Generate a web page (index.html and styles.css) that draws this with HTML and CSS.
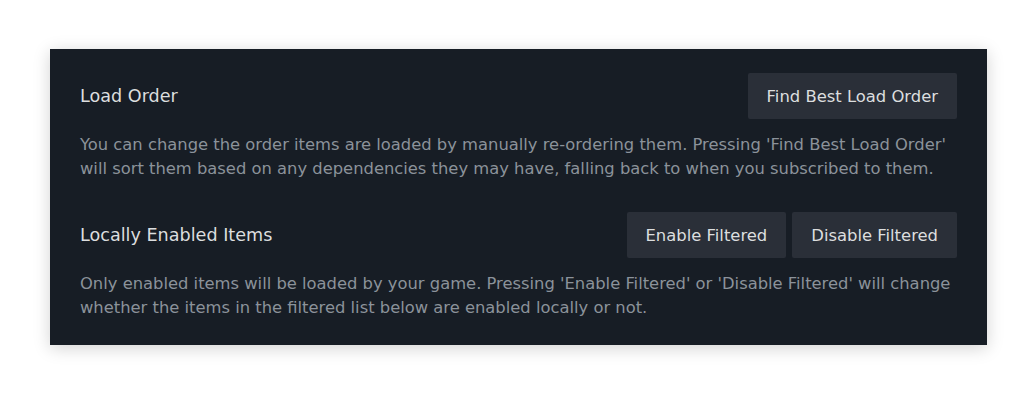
FILE: index.html
```html
<!DOCTYPE html>
<html>
<head>
<meta charset="utf-8">
<link rel="stylesheet" href="styles.css">
</head>
<body>
<div class="panel">
  <section class="section">
    <div class="row">
      <div class="title">Load Order</div>
      <div class="actions">
        <button class="btn">Find Best Load Order</button>
      </div>
    </div>
    <p class="desc">You can change the order items are loaded by manually re-ordering them. Pressing 'Find Best Load Order' will sort them based on any dependencies they may have, falling back to when you subscribed to them.</p>
  </section>
  <section class="section">
    <div class="row">
      <div class="title">Locally Enabled Items</div>
      <div class="actions">
        <button class="btn">Enable Filtered</button>
        <button class="btn">Disable Filtered</button>
      </div>
    </div>
    <p class="desc">Only enabled items will be loaded by your game. Pressing 'Enable Filtered' or 'Disable Filtered' will change whether the items in the filtered list below are enabled locally or not.</p>
  </section>
</div>
</body>
</html>
```
FILE: styles.css
```css
html, body {
  margin: 0;
  background: #ffffff;
}
body {
  padding: 49px 37px 48px 50px;
  font-family: "DejaVu Sans", sans-serif;
}
.panel {
  background: #171d25;
  box-shadow: 0 3px 16px rgba(0, 0, 0, 0.18);
  padding: 24px 30px 25px 30px;
  display: flex;
  flex-direction: column;
  gap: 31px;
}
.section {
  display: flex;
  flex-direction: column;
}
.row {
  display: flex;
  align-items: center;
  justify-content: space-between;
  height: 46px;
}
.title {
  color: #dcdedf;
  font-size: 17.6px;
}
.actions {
  display: flex;
  gap: 6px;
}
.btn {
  font-family: inherit;
  font-size: 16.4px;
  color: #dcdedf;
  background: #2a2f38;
  border: none;
  border-radius: 2px;
  height: 46px;
  padding: 0 19px;
}
.desc {
  margin: 14px 0 0 0;
  color: #8b929a;
  font-size: 16.35px;
  line-height: 24px;
}
```
